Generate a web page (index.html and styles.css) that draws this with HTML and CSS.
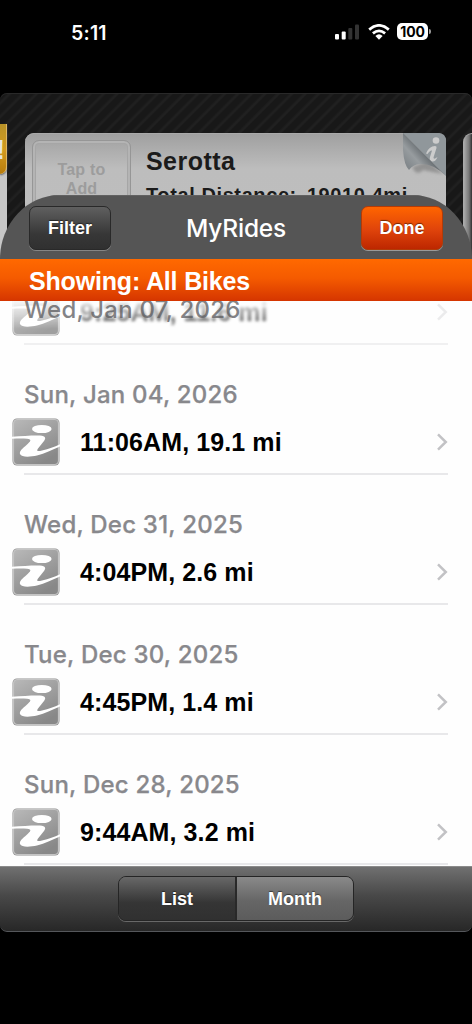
FILE: index.html
```html
<!DOCTYPE html>
<html lang="en">
<head>
<meta charset="utf-8">
<title>MyRides</title>
<link rel="stylesheet" href="styles.css">
</head>
<body>
<svg width="0" height="0" class="defs">
  <defs>
    <linearGradient id="silver" x1="0" y1="0" x2="0.6" y2="1"><stop offset="0" stop-color="#b9b9b9"/><stop offset="1" stop-color="#888"/></linearGradient>
    <symbol id="ride" viewBox="0 0 48 48">
      <rect x="0.5" y="0.5" width="47" height="47" rx="4.5" fill="#909090"/>
      <rect x="1.5" y="1.5" width="45" height="45" rx="4" fill="url(#silver)" stroke="#c4c4c4" stroke-width="1.2"/>
      <ellipse cx="29.8" cy="11" rx="9.8" ry="4.1" fill="#fff"/>
      <path d="M0 18.800C10 18.100 20 17.400 28 17.600C34 18 34 20.500 32 23L26 30.500C24 33.500 26 33.500 30 32.500C37 31 42 29 48 26.300V28.500C40 31.500 33 35.500 25 37.500C18 39 9.500 39.500 8 36C7 33 11 30 14.500 27C18.500 23.500 20.500 21.500 15 20.800C10 20.300 5 20.600 0 20.800Z" fill="#fff"/>
    </symbol>
    <symbol id="chev" viewBox="0 0 12 20"><path d="M2 2.300L9.800 10L2 17.700" fill="none" stroke="#c2c2c5" stroke-width="2.500"/></symbol>
  </defs>
</svg>

<header class="status">
  <span class="clock">5:11</span>
  <svg class="signal" width="24" height="16" viewBox="0 0 24 16"><rect x="0" y="10" width="4" height="5.500" rx="1" fill="#fff"/><rect x="6.700" y="7.500" width="4" height="8" rx="1" fill="#fff"/><rect x="13.300" y="4" width="4" height="11.500" rx="1" fill="#333"/><rect x="20" y="0.500" width="4" height="15" rx="1" fill="#333"/></svg>
  <svg class="wifi" width="22" height="16" viewBox="0 0 22 16"><g fill="none" stroke="#fff" stroke-width="2.800"><path d="M1.200 5.600Q11 -2.800 20.800 5.600"/><path d="M4.900 9.400Q11 4.300 17.100 9.400"/></g><path d="M7.400 12Q11 8.700 14.600 12L11 15.700Z" fill="#fff"/></svg>
  <span class="battery">100</span>
  <span class="battery-tip"></span>
</header>

<main class="app">
  <div class="bikes">
    <div class="edge-left"><div class="badge">!</div></div>
    <div class="bike">
      <div class="photo">Tap to<br>Add</div>
      <div class="bike-text"><div class="bike-name">Serotta</div><div class="bike-total"><span>Total Distance:</span><span>19010.4mi</span></div></div>
      <svg class="curl" width="43" height="44" viewBox="0 0 43 44">
        <defs><linearGradient id="page" gradientUnits="userSpaceOnUse" x1="4" y1="34" x2="22" y2="18"><stop offset="0" stop-color="#80868a"/><stop offset="0.500" stop-color="#979c9f"/><stop offset="1" stop-color="#63696d"/></linearGradient><filter id="soft"><feGaussianBlur stdDeviation="1.500"/></filter></defs>
        <path d="M9 34Q14 44 20 37L40 41L25 28Z" fill="#777" opacity="0.600" filter="url(#soft)"/>
        <path d="M0 0H35Q43 0 43 8V43Z" fill="#90979b"/>
        <circle cx="33" cy="7.500" r="3.300" fill="#ccc"/><path d="M23 20.500Q26 13 32 13Q34 13 33.500 15L30.500 24.500Q30.500 27 34.500 24Q32.500 29 29 28.500Q26 27.500 27 24L29 17.500Q27 17 24.500 21Z" fill="#ccc"/>
        <path d="M0 0L43 43Q30 30 17 31Q10 31.500 6 37Q1 32 0 17Z" fill="url(#page)"/>
      </svg>
    </div>
    <div class="edge-right"></div>
  </div>

  <section class="sheet">
    <div class="sheet-top">
      <nav class="nav"><button class="btn filter">Filter</button><h1 class="title"><span>MyRides</span></h1><button class="btn done">Done</button></nav>
      <div class="showing"><span>Showing: All Bikes</span></div>
    </div>
    <div class="list">
      <div class="group passing">
        <div class="row faded"><svg class="icon" width="48" height="48"><use href="#ride"/></svg><span class="ride">9:25AM, 11.6 mi</span><svg class="chev" width="12" height="20"><use href="#chev"/></svg></div>
        <h2 class="date pinned">Wed, Jan 07, 2026</h2>
      </div>
      <div class="group"><h2 class="date">Sun, Jan 04, 2026</h2><div class="row"><svg class="icon" width="48" height="48"><use href="#ride"/></svg><span class="ride">11:06AM, 19.1 mi</span><svg class="chev" width="12" height="20"><use href="#chev"/></svg></div></div>
      <div class="group"><h2 class="date">Wed, Dec 31, 2025</h2><div class="row"><svg class="icon" width="48" height="48"><use href="#ride"/></svg><span class="ride">4:04PM, 2.6 mi</span><svg class="chev" width="12" height="20"><use href="#chev"/></svg></div></div>
      <div class="group"><h2 class="date">Tue, Dec 30, 2025</h2><div class="row"><svg class="icon" width="48" height="48"><use href="#ride"/></svg><span class="ride">4:45PM, 1.4 mi</span><svg class="chev" width="12" height="20"><use href="#chev"/></svg></div></div>
      <div class="group"><h2 class="date">Sun, Dec 28, 2025</h2><div class="row"><svg class="icon" width="48" height="48"><use href="#ride"/></svg><span class="ride">9:44AM, 3.2 mi</span><svg class="chev" width="12" height="20"><use href="#chev"/></svg></div></div>
    </div>
    <footer class="toolbar"><div class="segments"><button class="seg on">List</button><button class="seg">Month</button></div></footer>
  </section>
</main>
</body>
</html>
```
FILE: styles.css
```css
* { box-sizing: border-box; }
body { margin: 0; width: 472px; height: 1024px; background: #000; overflow: hidden; font-family: "Liberation Sans", Arial, sans-serif; }
h1, h2 { margin: 0; }
button { border: 0; padding: 0; font: bold 18px/1 "Liberation Sans", Arial, sans-serif; color: #fff; }
.defs { display: block; height: 0; }

.status { height: 93px; display: flex; align-items: flex-start; padding: 24px 0 0 71px; color: #fff; }
.clock { font: 600 19.5px/18px Inter, sans-serif; width: 264px; letter-spacing: 0.2px; }
.wifi { margin-left: 9px; }
.battery { margin: -1px 0 0 7px; width: 31px; height: 17px; border-radius: 5px; background: #fff; color: #000; font: 700 14px/17px Inter, sans-serif; letter-spacing: -0.2px; text-align: center; }
.battery-tip { width: 2px; height: 5px; margin: 5px 0 0 1px; background: #999; border-radius: 0 2px 2px 0; }

.app { position: relative; height: 839px; overflow: hidden; border-radius: 7px; background: repeating-linear-gradient(135deg, #181818 0 5px, #202020 7px 8px, #181818 9.5px); box-shadow: inset 0 1px #292929; }
.bikes { display: flex; height: 220px; padding-top: 40px; }
.edge-left { width: 7px; height: 180px; margin-top: -9px; background: #c7c7c7; }
.badge { height: 50px; background: linear-gradient(#b89227, #d29a20 50%, #b87c0c); border-right: 1px solid #deb665; border-radius: 0 0 7px 0; color: #e8e4dc; font: bold 27px/53px "Liberation Sans", sans-serif; text-indent: -4px; overflow: hidden; box-shadow: 0 1px 2px #555; }
.bike { position: relative; width: 421px; margin: 0 17px 0 18px; display: flex; border-radius: 9px 9px 0 0; background: linear-gradient(#9f9f9f, #bdbdbd 36px, #bfbfbf); box-shadow: inset 0 1px #a9a9a9; }
.photo { margin: 7px 0 0 7px; width: 99px; height: 120px; border: 1px solid #969696; border-radius: 7px; box-shadow: inset 0 0 0 2px #b4b4b4, inset 0 0 0 3px #a6a6a6; text-align: center; color: #9c9c9c; font: bold 16px/19px "Liberation Sans", sans-serif; letter-spacing: .2px; padding-top: 19px; }
.bike-text { padding: 13px 0 0 15px; color: #1b1b1b; font-weight: bold; }
.bike-name { font-size: 25px; line-height: 30px; letter-spacing: .45px; }
.bike-total { display: flex; gap: 10px; font-size: 20px; letter-spacing: .6px; line-height: 24px; padding-top: 7px; white-space: nowrap; }
.curl { position: absolute; right: 0; top: 0; }
.edge-right { width: 9px; border: 1px solid #aaa; border-right: 0; border-radius: 9px 0 0 0; background: linear-gradient(90deg, #aaa, #777 5px, #303030 8px); }

.sheet { position: absolute; left: 0; right: 0; top: 102px; bottom: 0; display: flex; flex-direction: column; }
.sheet-top { border-radius: 60px 60px 0 0 / 64px 64px 0 0; overflow: hidden; }
.nav { height: 64px; display: flex; align-items: center; justify-content: space-between; padding: 0 29px; background: #555; border-top: 1px solid #626262; }
.btn { width: 82px; height: 44px; border-radius: 7px; text-shadow: 0 -1px 1px rgba(0, 0, 0, .5); }
.filter { border: 1px solid #292929; background: linear-gradient(#606060, #373737 65%, #303030); box-shadow: 0 1px #858585; }
.done { border: 1px solid #b33b07; background: linear-gradient(#ff6500, #df430b 55%, #bd2700); box-shadow: 0 1px #999; }
.title { color: #fff; font: 500 24.5px/30px Inter, sans-serif; letter-spacing: -.2px; }
.showing { height: 42px; padding-left: 29px; background: linear-gradient(#ff6900, #f55b00 45%, #d53500); color: #fff; font-size: 25px; font-weight: bold; letter-spacing: -.17px; line-height: 45px; }
.list { height: 565px; background: #fefefe; overflow: hidden; }
.group { height: 130px; position: relative; padding-top: 31px; }
.group::after { content: ""; position: absolute; left: 24px; right: 24px; bottom: 0; height: 2px; background: #e8e8ea; }
.date { height: 38px; padding-left: 24px; color: #88888c; font: 500 24px/38px Inter, sans-serif; letter-spacing: .22px; white-space: nowrap; -webkit-text-stroke: .25px currentColor; }
.row { height: 60px; padding: 0 24px 0 12px; display: flex; align-items: center; color: #000; }
.icon { margin-right: 20px; margin-top: -4px; }
.ride { flex: 1; font-size: 25px; font-weight: bold; letter-spacing: .1px; line-height: 50px; margin-top: -4px; }
.chev { margin-top: -4px; }
.passing { height: 44px; padding: 0; }
.passing::after { background: #f0f0f1; }
.faded { position: absolute; left: 0; right: 0; top: -17px; }
.faded .icon { opacity: .8; filter: blur(.7px); -webkit-mask-image: linear-gradient(transparent 20%, #000 85%); mask-image: linear-gradient(transparent 20%, #000 85%); }
.faded .ride { color: #666; filter: blur(1.4px); -webkit-mask-image: linear-gradient(rgba(0, 0, 0, .2) 30%, #000 70%); mask-image: linear-gradient(rgba(0, 0, 0, .2) 30%, #000 70%); }
.faded .chev { opacity: .3; filter: blur(.5px); }
.pinned { position: absolute; top: -10px; left: 0; color: rgba(90, 90, 94, .75); -webkit-text-stroke: 0; }
.toolbar { height: 66px; display: flex; justify-content: center; padding-top: 9px; background: linear-gradient(#707070, #484848 45%, #272727); border-top: 1px solid #8b8b8b; border-bottom: 1px solid #55575b; border-radius: 0 0 7px 7px; }
.segments { width: 236px; height: 45px; display: flex; border: 1px solid #252525; border-radius: 8px; overflow: hidden; box-shadow: 0 1px #686868; }
.seg { flex: 1; background: linear-gradient(#8a8a8a, #666 55%, #5c5c5c); text-shadow: 0 -1px 1px rgba(0, 0, 0, .5); }
.seg.on { background: linear-gradient(#686868, #353535 60%, #303030); border-right: 2px solid #292929; }
```
